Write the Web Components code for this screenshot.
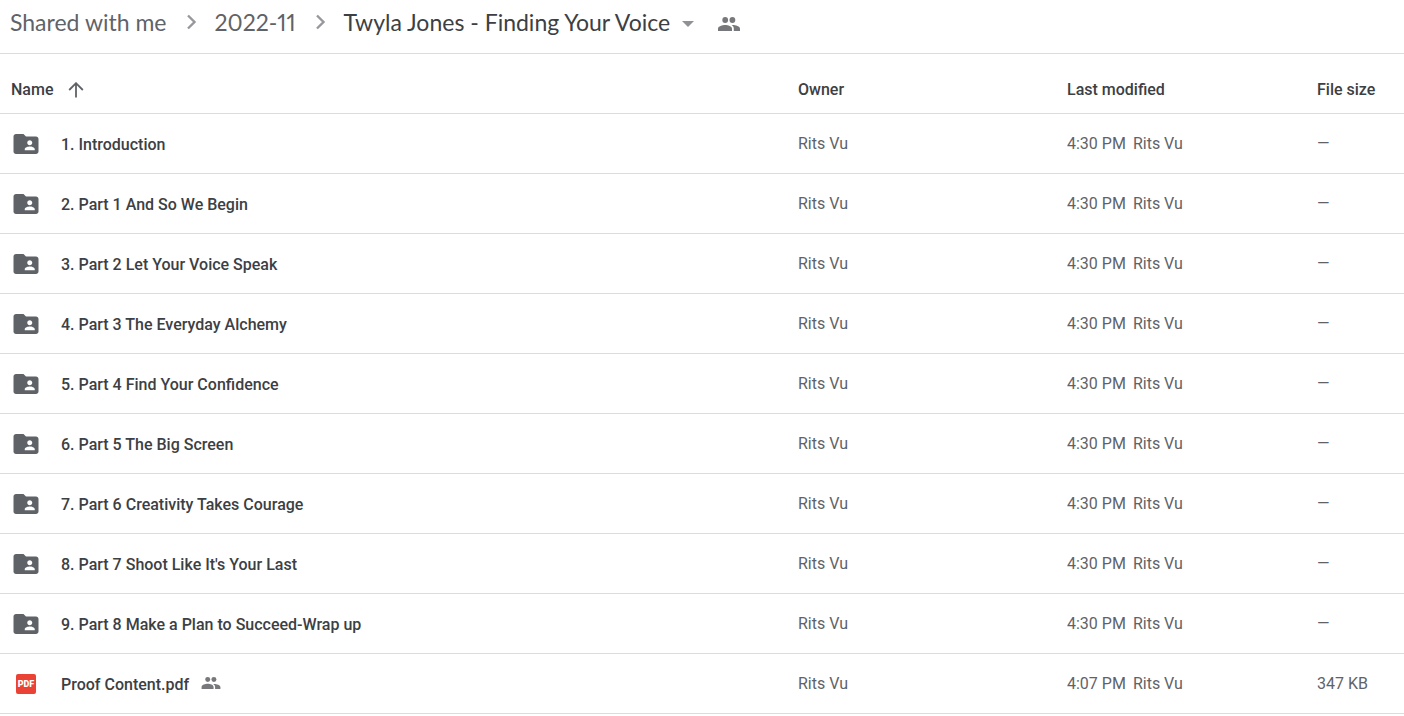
<!DOCTYPE html>
<html lang="en">
<head>
<meta charset="utf-8">
<title>Twyla Jones - Finding Your Voice</title>
<style>
    body {
        margin: 0;
        background: #fff;
        color: #3c4043;
        font: 16px/24px Roboto, "Liberation Sans", sans-serif;
    }
</style>
</head>
<body>
<drive-path>
    <path-crumb>Shared with me</path-crumb>
    <path-crumb>2022-11</path-crumb>
    <path-crumb current>Twyla Jones - Finding Your Voice</path-crumb>
</drive-path>
<file-list></file-list>

<script>
const ICONS = {
    chevron: '<svg width="16" height="16" viewBox="0 0 16 16"><path d="M5 1.500l6.500 6.500L5 14.500" fill="none" stroke="#97989b" stroke-width="2.4"/></svg>',
    caret: '<svg width="12" height="6" viewBox="0 0 12 6"><path d="M0 0h12L6 6z" fill="#8f9194"/></svg>',
    people: '<svg width="22" height="14" viewBox="0 0 22 14"><g fill="#77787b"><circle cx="7.2" cy="3" r="2.9"/><circle cx="14.400" cy="3" r="2.900"/><path d="M0 14v-2.300C0 9.300 4.400 8 7.200 8s6.800 1.300 6.800 3.700V14zM13.600 8.100c3.700-.2 8.400 1.200 8.400 3.600V14h-6.200v-2.300c0-1.500-.8-2.700-2.200-3.600z"/></g></svg>',
    arrow: '<svg width="16" height="16" viewBox="0 0 16 16"><path d="M8 15.500V1.500M1.200 8L8 1.200 14.800 8" fill="none" stroke="#5f6368" stroke-width="1.800"/></svg>',
    folder: '<svg width="30" height="30" viewBox="0 0 24 24"><path fill="#5f6368" d="M20 6h-8l-2-2H4c-1.100 0-2 .9-2 2v12c0 1.100.9 2 2 2h16c1.100 0 2-.9 2-2V8c0-1.100-.9-2-2-2zm-5 3c1.100 0 2 .9 2 2s-.9 2-2 2-2-.9-2-2 .9-2 2-2zm4 8h-8v-1c0-1.330 2.670-2 4-2s4 .67 4 2v1z"/></svg>',
    pdf: '<svg width="30" height="30" viewBox="0 0 30 30"><rect x="5" y="5" width="20" height="20" rx="2" fill="#ea4335"/><text x="15" y="18" text-anchor="middle" font-family="Roboto, sans-serif" font-size="9" font-weight="900" fill="#fff">PDF</text></svg>'
};

const FILES = [
    { name: '1. Introduction' },
    { name: '2. Part 1 And So We Begin' },
    { name: '3. Part 2 Let Your Voice Speak' },
    { name: '4. Part 3 The Everyday Alchemy' },
    { name: '5. Part 4 Find Your Confidence' },
    { name: '6. Part 5 The Big Screen' },
    { name: '7. Part 6 Creativity Takes Courage' },
    { name: "8. Part 7 Shoot Like It's Your Last" },
    { name: '9. Part 8 Make a Plan to Succeed-Wrap up' },
    { name: 'Proof Content.pdf', icon: 'pdf', shared: true, time: '4:07 PM', size: '347 KB' }
];

class DriveIcon extends HTMLElement {
    constructor() {
        super();
        const shadow = this.attachShadow({ mode: 'open' });
        shadow.innerHTML = `
            <style>
                :host { display: inline-flex; flex: none; }
                svg { display: block; }
                :host([small]) svg { width: 20px; height: 12px; }
            </style>
            ${ICONS[this.getAttribute('name')]}
        `;
    }
}

class DrivePath extends HTMLElement {
    constructor() {
        super();
        const shadow = this.attachShadow({ mode: 'open' });
        shadow.innerHTML = `
            <style>
                :host {
                    display: block;
                    border-bottom: 1px solid #dadce0;
                }
                nav {
                    display: flex;
                    align-items: center;
                    height: 43px;
                    padding: 0 10px 10px;
                }
            </style>
            <nav aria-label="Folder path"><slot></slot></nav>
        `;
    }
}

class PathCrumb extends HTMLElement {
    constructor() {
        super();
        const shadow = this.attachShadow({ mode: 'open' });
        const current = this.hasAttribute('current');
        shadow.innerHTML = `
            <style>
                :host {
                    display: flex;
                    align-items: center;
                    font: 23px/30px Lato, Roboto, sans-serif;
                    font-variant-numeric: proportional-nums;
                    color: #5f6368;
                    white-space: nowrap;
                }
                :host([current]) { color: #3c4043; }
                a { color: inherit; text-decoration: none; }
                .next { margin: 0 16px; }
                button {
                    display: flex;
                    align-items: center;
                    gap: 12px;
                    margin: 0;
                    padding: 0;
                    border: 0;
                    background: none;
                    font: inherit;
                    color: inherit;
                }
                button drive-icon { margin-top: 4px; }
                .share { margin-left: 24px; }
            </style>
            ${current
                ? `<button type="button"><slot></slot><drive-icon name="caret"></drive-icon></button>
                   <button type="button" class="share" aria-label="Shared"><drive-icon name="people"></drive-icon></button>`
                : `<a href="#"><slot></slot></a><drive-icon class="next" name="chevron"></drive-icon>`}
        `;
    }
}

class FileList extends HTMLElement {
    constructor() {
        super();
        const shadow = this.attachShadow({ mode: 'open' });
        shadow.innerHTML = `
            <style>
                :host { display: block; }
                table {
                    width: 100%;
                    table-layout: fixed;
                    border-collapse: separate;
                    border-spacing: 0;
                }
                th, td {
                    box-sizing: border-box;
                    height: 60px;
                    padding: 0;
                    border-bottom: 1px solid #dadce0;
                    text-align: left;
                    vertical-align: middle;
                    font-weight: 400;
                    color: #5f6368;
                    white-space: nowrap;
                }
                th {
                    font-weight: 500;
                    color: #3c4043;
                }
                thead th { padding-top: 12px; }
                .owner { width: 269px; }
                .modified { width: 250px; }
                .size { width: 87px; }
                .sort, .name, .time {
                    display: flex;
                    align-items: center;
                }
                .sort {
                    gap: 15px;
                    margin: 0;
                    padding: 0 0 0 11px;
                    border: 0;
                    background: none;
                    font: inherit;
                    color: inherit;
                }
                .name { padding: 1px 0 0 11px; }
                .label {
                    margin: 0 12px 0 20px;
                    padding-top: 2px;
                }
                .shared { margin-bottom: 3px; }
                .time { gap: 7px; }
            </style>
            <table>
                <thead>
                    <tr>
                        <th scope="col"><button type="button" class="sort">Name<drive-icon name="arrow"></drive-icon></button></th>
                        <th scope="col" class="owner">Owner</th>
                        <th scope="col" class="modified">Last modified</th>
                        <th scope="col" class="size">File size</th>
                    </tr>
                </thead>
                <tbody>
                    ${FILES.map(file => this.row(file)).join('')}
                </tbody>
            </table>
        `;
    }

    row({ name, icon = 'folder', shared = false, time = '4:30 PM', size = '—' }) {
        return `
            <tr>
                <th scope="row">
                    <div class="name">
                        <drive-icon name="${icon}"></drive-icon>
                        <span class="label">${name}</span>
                        ${shared ? '<drive-icon class="shared" name="people" small></drive-icon>' : ''}
                    </div>
                </th>
                <td>Rits Vu</td>
                <td><div class="time"><span>${time}</span><span>Rits Vu</span></div></td>
                <td>${size}</td>
            </tr>
        `;
    }
}

customElements.define('drive-icon', DriveIcon);
customElements.define('drive-path', DrivePath);
customElements.define('path-crumb', PathCrumb);
customElements.define('file-list', FileList);
</script>
</body>
</html>
